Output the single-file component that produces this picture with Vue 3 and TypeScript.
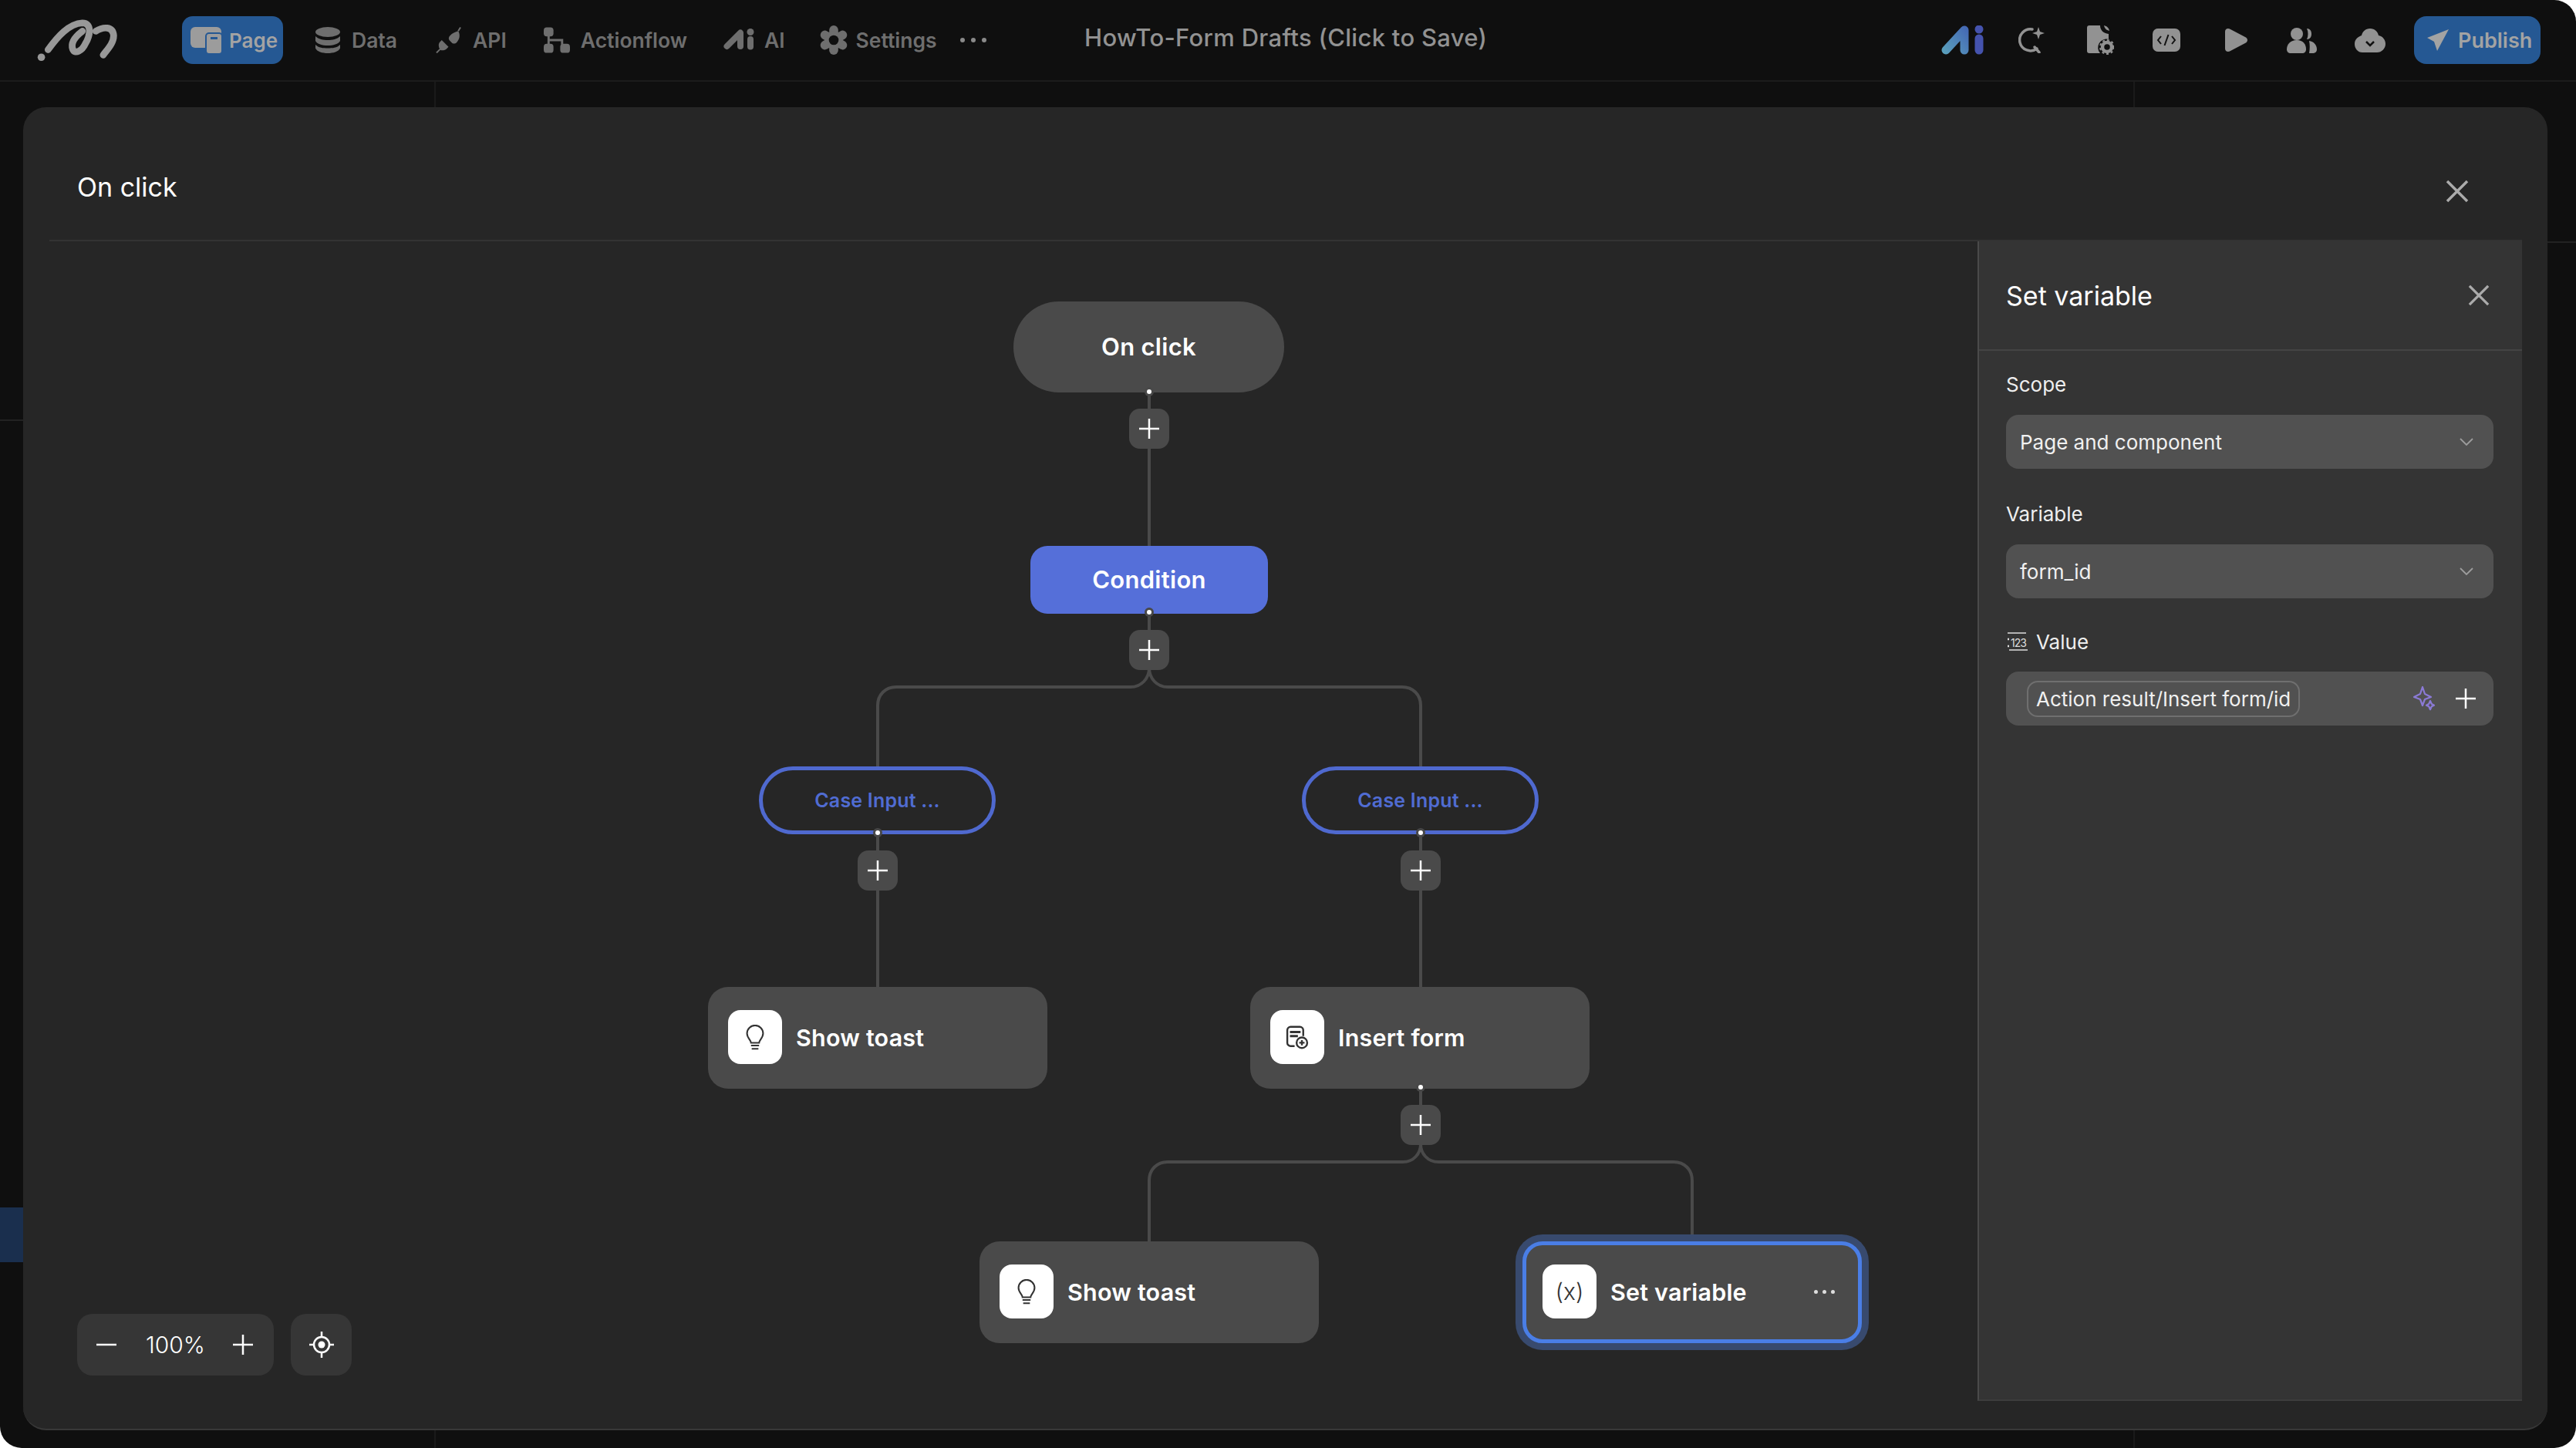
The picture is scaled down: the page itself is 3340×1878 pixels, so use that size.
<script setup lang="ts">
interface NavItem {
  label: string
  icon: string
}

interface FlowNode {
  label: string
  icon: 'bulb' | 'form' | 'var'
  x: number
  y: number
  selected?: boolean
}

const navItems: NavItem[] = [
  { label: 'Data', icon: 'data' },
  { label: 'API', icon: 'api' },
  { label: 'Actionflow', icon: 'flow' },
  { label: 'AI', icon: 'ai' },
  { label: 'Settings', icon: 'gear' },
]

const actionNodes: FlowNode[] = [
  { label: 'Show toast', icon: 'bulb', x: 888, y: 967 },
  { label: 'Insert form', icon: 'form', x: 1591, y: 967 },
  { label: 'Show toast', icon: 'bulb', x: 1240, y: 1297 },
  { label: 'Set variable', icon: 'var', x: 1944, y: 1297, selected: true },
]

const casePills = [{ x: 954 }, { x: 1658 }]

// centres of the little add buttons, relative to the canvas
const addButtons = [
  { x: 1460, y: 244 },
  { x: 1460, y: 531 },
  { x: 1108, y: 817 },
  { x: 1812, y: 817 },
  { x: 1812, y: 1147 },
]

const ports = [
  { x: 1460, y: 195 },
  { x: 1460, y: 481 },
  { x: 1108, y: 767 },
  { x: 1812, y: 767 },
  { x: 1812, y: 1097 },
]

const pos = (p: { x: number; y: number }) => ({ left: `${p.x}px`, top: `${p.y}px` })
</script>

<template>
  <div class="screen">
    <header class="topbar">
      <svg class="logo" viewBox="0 0 110 60" fill="none" stroke="#989898" stroke-linecap="round" stroke-width="9">
        <circle cx="7" cy="53" r="5" fill="#989898" stroke="none" />
        <path d="M16 43C29 25 44 8 62 7C76 7 72 25 66 35C62 44 52 50 49 42C46 33 54 24 62 18" />
        <path d="M80 18C90 12 103 11 104 24C104 34 96 42 90 50" />
      </svg>

      <nav class="nav">
        <div class="nav-item active">
          <svg viewBox="0 0 40 34" class="nav-icon page-icon">
            <rect width="40" height="27" rx="6" fill="#9c9c9c" />
            <rect x="19" y="7" width="23" height="29" rx="5" fill="#255893" />
            <rect x="21" y="9" width="19" height="25" rx="3" fill="#9c9c9c" />
            <rect x="26" y="13" width="9" height="3" fill="#255893" />
          </svg>
          <span>Page</span>
        </div>
        <div v-for="item in navItems" :key="item.label" class="nav-item" :class="`item-${item.icon}`">
          <svg v-if="item.icon === 'data'" viewBox="0 0 33 34" class="nav-icon">
            <ellipse cx="16.5" cy="6.5" rx="16" ry="6.5" fill="#6e6e6e" />
            <path fill="#6e6e6e" d="M.5 12c4 4 10 5 16 5s12-1 16-5v6c-2 4-9 6-16 6s-14-2-16-6z" />
            <path fill="#6e6e6e" d="M.5 23c4 4 10 4.500 16 4.500s12-.5 16-4.500v4.500c-2 4.500-9 6.500-16 6.500s-14-2-16-6.500z" />
          </svg>
          <svg v-else-if="item.icon === 'api'" viewBox="0 0 35 34" class="nav-icon">
            <path fill="#6e6e6e" d="M19 11c3-3 7-5 11-6 3 5 2 11-2 15-2 2-4 2-6 1l-4-4c-1-2-1-4 1-6z" />
            <path fill="#6e6e6e" d="M5 20l3-3 9 9-3 3c-3 2-6 2-8 1-2-3-3-7-1-10z" />
            <path stroke="#6e6e6e" stroke-width="2" d="M30 5l3-5M6 29l-5 5" />
          </svg>
          <svg v-else-if="item.icon === 'flow'" viewBox="0 0 35 34" class="nav-icon">
            <rect x="0" y="0" width="13" height="12" rx="4" fill="#6e6e6e" />
            <rect x="0" y="22" width="13" height="12" rx="4" fill="#6e6e6e" />
            <rect x="22" y="22" width="13" height="12" rx="4" fill="#6e6e6e" />
            <path fill="none" stroke="#6e6e6e" stroke-width="3" d="M6.500 10v14M6.500 17h18v6" />
          </svg>
          <svg v-else-if="item.icon === 'ai'" viewBox="0 0 40 28" class="nav-icon">
            <path fill="none" stroke="#6e6e6e" stroke-width="8" stroke-linecap="round" stroke-linejoin="round" d="M4.500 23L22 5.500V23" />
            <circle cx="35" cy="4.500" r="4.500" fill="#6e6e6e" />
            <path stroke="#6e6e6e" stroke-width="8" stroke-linecap="round" d="M35 14V23.500" />
          </svg>
          <svg v-else viewBox="0 0 36 36" class="nav-icon">
            <g stroke="#6e6e6e" stroke-width="11" stroke-linecap="round">
              <path d="M18 5.500V30.500" />
              <path d="M18 5.500V30.500" transform="rotate(60 18 18)" />
              <path d="M18 5.500V30.500" transform="rotate(120 18 18)" />
            </g>
            <circle cx="18" cy="18" r="11" fill="#6e6e6e" />
            <circle cx="18" cy="18" r="6" fill="#0f0f0f" />
          </svg>
          <span>{{ item.label }}</span>
        </div>
        <div class="nav-more"><i></i><i></i><i></i></div>
      </nav>

      <div class="doc-title">HowTo-Form Drafts (Click to Save)</div>

      <div class="tools">
        <svg viewBox="0 0 55 38" class="ai-mark">
          <defs>
            <linearGradient id="aiGrad" gradientUnits="userSpaceOnUse" x1="2" y1="34" x2="36" y2="6">
              <stop offset="0" stop-color="#5aa0bc" />
              <stop offset="1" stop-color="#4468b4" />
            </linearGradient>
          </defs>
          <path fill="none" stroke="url(#aiGrad)" stroke-width="11" stroke-linecap="round" stroke-linejoin="round" d="M6 32L30 6V32" />
          <circle cx="49" cy="5" r="5.500" fill="#4553ae" />
          <path stroke="#4553ae" stroke-width="11" stroke-linecap="round" d="M49 17V32" />
        </svg>
        <svg viewBox="0 0 34 34" class="tool tool-search" fill="none" stroke="#929292" stroke-width="3.500" stroke-linecap="round">
          <path d="M18 3A14 14 0 1 0 24 28M21 26l6 7" />
          <path fill="#929292" stroke="none" d="M26 0l2 6 6 2-6 2-2 6-2-6-6-2 6-2z" />
        </svg>
        <svg viewBox="0 0 35 38" class="tool tool-file">
          <path fill="#929292" d="M3 0h14c0 6 4 10 11 11v7a11 11 0 0 0-11 18H3a3 3 0 0 1-3-3V3a3 3 0 0 1 3-3z" />
          <path fill="#929292" d="M22 0c4 1 6 3 7 7-4-1-6-3-7-7z" />
          <circle cx="26" cy="28" r="6" fill="none" stroke="#929292" stroke-width="4.500" />
          <circle cx="26" cy="28" r="9" fill="none" stroke="#929292" stroke-width="2" stroke-dasharray="3 3" />
        </svg>
        <svg viewBox="0 0 36 30" class="tool tool-code">
          <rect width="36" height="30" rx="7" fill="#929292" />
          <path fill="none" stroke="#111" stroke-width="2" d="M11 10l-4 5 4 5M25 10l4 5-4 5M20.500 8l-5 14" />
        </svg>
        <svg viewBox="0 0 29 30" class="tool tool-play">
          <path fill="#929292" d="M0 4c0-4 4-5 7-3l19 10c4 2 4 6 0 8L7 29c-3 2-7 1-7-3z" />
        </svg>
        <svg viewBox="0 0 39 33" class="tool tool-users">
          <circle cx="13" cy="8" r="8" fill="#929292" />
          <path fill="#929292" d="M0 28c0-7 5-12 13-12s12 5 12 12c0 3-2 5-5 5H5c-3 0-5-2-5-5z" />
          <path fill="#929292" d="M26 1c4 0 6 3 6 7s-2 7-6 7c2-4 2-10 0-14zM29 17c6 1 10 5 10 11 0 3-2 5-6 5h-4c1-6 1-11 0-16z" />
        </svg>
        <svg viewBox="0 0 40 31" class="tool tool-cloud">
          <path fill="#929292" d="M20 0c6 0 10 4 11 9 5 1 9 5 9 11 0 6-5 11-11 11H10C4 31 0 26 0 20c0-6 4-9 9-11 1-5 5-9 11-9z" />
          <path fill="none" stroke="#111" stroke-width="2.500" d="M15 17l5 5 5-5" />
        </svg>
        <div class="publish">
          <svg viewBox="0 0 28 28" class="publish-icon">
            <path fill="#a3a3a3" d="M28 0L0 11l9 5 4 12z" />
          </svg>
          <span>Publish</span>
        </div>
      </div>
    </header>

    <div class="left-strip"></div>
    <div class="rule rule-left"></div>
    <div class="rule rule-right"></div>
    <div class="stub stub-left"></div>
    <div class="stub stub-right"></div>

    <section class="modal">
      <div class="modal-head">
        <h1>On click</h1>
        <svg viewBox="0 0 30 30" class="close modal-close">
          <path d="M2 2l26 26M28 2L2 28" />
        </svg>
      </div>

      <div class="modal-body">
        <div class="canvas">
          <svg class="wires" width="2535" height="1500" fill="none" stroke="#4a4a4a" stroke-width="4">
            <path d="M1460 194V396" />
            <path d="M1460 481V553C1460 567 1450 578 1436 578H1132C1118 578 1108 588 1108 602V682" />
            <path d="M1460 553C1460 567 1470 578 1484 578H1788C1802 578 1812 588 1812 602V682" />
            <path d="M1108 767V967" />
            <path d="M1812 767V967" />
            <path d="M1812 1097V1171C1812 1183 1803 1194 1789 1194H1484C1470 1194 1460 1204 1460 1218V1297" />
            <path d="M1812 1171C1812 1183 1821 1194 1835 1194H2140C2154 1194 2164 1204 2164 1218V1297" />
          </svg>

          <div class="node start">On click</div>
          <div class="node condition">Condition</div>
          <div v-for="pill in casePills" :key="pill.x" class="node case" :style="{ left: `${pill.x}px` }">Case Input ...</div>

          <div
            v-for="node in actionNodes"
            :key="`${node.x}-${node.y}`"
            class="node action"
            :class="{ selected: node.selected }"
            :style="pos(node)"
          >
            <span class="action-icon">
              <svg v-if="node.icon === 'bulb'" viewBox="0 0 28 38" class="glyph" fill="none" stroke="#333" stroke-width="2.400">
                <path d="M8 27c0-4-6-7-6-14a12 12 0 0 1 24 0c0 7-6 10-6 14z" />
                <path d="M8 31h12M9 36h10" />
              </svg>
              <svg v-else-if="node.icon === 'form'" viewBox="0 0 34 36" class="glyph form-glyph" fill="none" stroke="#333" stroke-width="2.800">
                <path d="M13 31H7a5 5 0 0 1-5-5V7a5 5 0 0 1 5-5h14a5 5 0 0 1 5 5v9" />
                <path d="M6 10h16M6 16h12" stroke-width="3.500" />
                <circle cx="24" cy="26" r="8" />
                <path d="M24 22v8M20 26h8" />
              </svg>
              <span v-else class="var-glyph">(x)</span>
            </span>
            <span class="action-label">{{ node.label }}</span>
            <span v-if="node.selected" class="action-more"><i></i><i></i><i></i></span>
          </div>

          <div v-for="p in ports" :key="`port-${p.x}-${p.y}`" class="port" :style="pos(p)"></div>
          <div v-for="b in addButtons" :key="`add-${b.x}-${b.y}`" class="add" :style="pos(b)">
            <svg viewBox="0 0 26 26" class="plus"><path d="M13 0v26M0 13h26" /></svg>
          </div>

          <div class="zoom-bar">
            <div class="zoom-box">
              <svg viewBox="0 0 26 26" class="plus"><path d="M0 13h26" /></svg>
              <span>100%</span>
              <svg viewBox="0 0 26 26" class="plus"><path d="M13 0v26M0 13h26" /></svg>
            </div>
            <div class="zoom-center">
              <svg viewBox="0 0 32 34" class="target" fill="none" stroke="#fff" stroke-width="2.500">
                <circle cx="16" cy="17" r="10" />
                <circle cx="16" cy="17" r="4.500" fill="#fff" stroke="none" />
                <path d="M16 0v7M16 27v7M0 17h6M26 17h6" />
              </svg>
            </div>
          </div>
        </div>

        <aside class="panel">
          <div class="panel-head">
            <span>Set variable</span>
            <svg viewBox="0 0 30 30" class="close panel-close">
              <path d="M2 2l26 26M28 2L2 28" />
            </svg>
          </div>
          <div class="panel-form">
            <label class="field-label">Scope</label>
            <div class="select">
              <span>Page and component</span>
              <svg viewBox="0 0 18 10" class="chev"><path d="M1 1l8 8 8-8" /></svg>
            </div>
            <label class="field-label">Variable</label>
            <div class="select">
              <span>form_id</span>
              <svg viewBox="0 0 18 10" class="chev"><path d="M1 1l8 8 8-8" /></svg>
            </div>
            <label class="field-label value-label">
              <svg viewBox="0 0 28 26" class="num-icon">
                <path d="M2 2h24M4 24h24" stroke="#ddd" stroke-width="1.500" />
                <path d="M2 10h2M2 19h2" stroke="#ddd" stroke-width="2.500" />
                <text x="6" y="20" font-size="14" fill="#ddd" font-family="Inter, sans-serif" letter-spacing="-1">123</text>
              </svg>
              <span>Value</span>
            </label>
            <div class="value-field">
              <span class="chip">Action result/Insert form/id</span>
              <svg viewBox="0 0 28 32" class="spark" fill="none" stroke="#8b7ad6" stroke-width="2.200" stroke-linejoin="round">
                <path d="M12 1l3 9 8 4-8 3-3 8-3-8-8-3 8-4z" />
                <path d="M22 19l1.800 4 3.200 1.800-3.200 1.400-1.800 4-1.800-4-3.200-1.400 3.200-1.800z" />
              </svg>
              <svg viewBox="0 0 26 26" class="plus field-plus"><path d="M13 0v26M0 13h26" /></svg>
            </div>
          </div>
        </aside>
      </div>
    </section>
  </div>
</template>

<style scoped>
.screen {
  position: relative;
  width: 3340px;
  height: 1878px;
  overflow: hidden;
  background: #0f0f0f;
  border-radius: 0 28px 28px 28px;
  font-family: Inter, "Noto Sans", sans-serif;
  color: #fff;
}

.topbar {
  position: relative;
  display: flex;
  align-items: center;
  height: 106px;
  padding: 0 46px 0 46px;
  box-sizing: border-box;
  border-bottom: 2px solid #1c1c1c;
}

.logo {
  width: 108px;
  height: 58px;
  flex: none;
}

.nav {
  display: flex;
  align-items: center;
  margin-left: 82px;
  font-size: 26.500px;
  font-weight: 600;
  color: #6e6e6e;
}

.nav-item {
  display: flex;
  align-items: center;
  gap: 14px;
  margin-right: 50px;
}

.nav-item.active {
  width: 131px;
  height: 62px;
  box-sizing: border-box;
  padding-left: 11px;
  gap: 10px;
  background: #255893;
  border-radius: 14px;
  color: #a3a3a3;
  margin-right: 41px;
  font-size: 26px;
}

.nav-icon {
  width: 34px;
  height: 34px;
  flex: none;
}

.page-icon {
  width: 40px;
}

.item-api {
  margin-right: 48px;
}

.item-flow {
  margin-right: 47px;
}

.item-ai .nav-icon {
  width: 40px;
  height: 28px;
  margin-top: -2px;
}

.item-ai {
  gap: 13px;
  margin-right: 44px;
}

.item-gear {
  gap: 10px;
}

.item-gear .nav-icon {
  width: 38px;
  height: 38px;
}

.nav-more {
  display: flex;
  gap: 8px;
  margin-left: -20px;
}

.nav-more i,
.action-more i {
  display: block;
  width: 6px;
  height: 6px;
  border-radius: 50%;
  background: #8a8a8a;
}

.doc-title {
  position: absolute;
  left: 1406px;
  top: 29px;
  font-size: 31px;
  line-height: 40px;
  font-weight: 500;
  letter-spacing: 0.3px;
  color: #929292;
  white-space: nowrap;
}

.tools {
  display: flex;
  align-items: center;
  margin-left: auto;
  gap: 44px;
}

.ai-mark {
  width: 55px;
  height: 38px;
}

.tool {
  flex: none;
}

.tool-search {
  width: 34px;
  height: 34px;
  margin-left: 1px;
}

.tool-file {
  width: 35px;
  height: 38px;
  margin-left: 11px;
}

.tool-code {
  width: 36px;
  height: 30px;
  margin-left: 6px;
}

.tool-play {
  width: 29px;
  height: 30px;
  margin-left: 14px;
}

.tool-users {
  width: 39px;
  height: 33px;
  margin-left: 7px;
}

.tool-cloud {
  width: 40px;
  height: 31px;
  margin-left: 5px;
}

.publish {
  display: flex;
  align-items: center;
  gap: 12px;
  width: 164px;
  height: 62px;
  box-sizing: border-box;
  padding-left: 17px;
  margin-left: -7px;
  border-radius: 16px;
  background: #255893;
  color: #a3a3a3;
  font-size: 27px;
  font-weight: 600;
}

.publish-icon {
  width: 28px;
  height: 28px;
}

.left-strip {
  position: absolute;
  left: 0;
  top: 1566px;
  width: 40px;
  height: 71px;
  background: #1a2f4e;
}

.rule {
  position: absolute;
  top: 106px;
  bottom: 0;
  width: 2px;
  background: #1a1a1a;
}

.rule-left {
  left: 563px;
}

.rule-right {
  left: 2766px;
}

.stub {
  position: absolute;
  height: 2px;
  background: #222;
}

.stub-left {
  left: 0;
  top: 544px;
  width: 32px;
}

.stub-right {
  left: 3300px;
  top: 313px;
  width: 40px;
}

.modal {
  position: absolute;
  left: 30px;
  top: 139px;
  width: 3273px;
  height: 1716px;
  display: flex;
  flex-direction: column;
  background: #262626;
  border-radius: 30px;
  border-bottom: 2px solid #383838;
  box-sizing: border-box;
}

.modal-head {
  display: flex;
  align-items: flex-start;
  justify-content: space-between;
  height: 174px;
  flex: none;
  box-sizing: border-box;
  margin: 0 33px 0 34px;
  padding: 0 69px 0 36px;
  border-bottom: 2px solid #333;
}

.modal-head h1 {
  margin: 83px 0 0;
  font-size: 34px;
  font-weight: 400;
  line-height: 42px;
}

.close {
  fill: none;
  stroke: #ababab;
  stroke-width: 3.500;
}

.modal-close {
  width: 30px;
  height: 30px;
  margin-top: 94px;
}

.modal-body {
  display: flex;
  flex: 1;
  min-height: 0;
  margin-bottom: 36px;
}

.canvas {
  position: relative;
  flex: 1;
  min-width: 0;
}

.wires {
  position: absolute;
  left: 0;
  top: 0;
}

.node {
  position: absolute;
  display: flex;
  align-items: center;
  justify-content: center;
  box-sizing: border-box;
  font-weight: 600;
  font-size: 31px;
  letter-spacing: 0.3px;
}

.start {
  left: 1284px;
  top: 78px;
  width: 351px;
  height: 118px;
  padding-bottom: 2px;
  border-radius: 59px;
  background: #4a4a4a;
}

.condition {
  left: 1306px;
  top: 395px;
  width: 308px;
  height: 88px;
  padding-bottom: 2px;
  border-radius: 22px;
  background: #556fd9;
}

.case {
  top: 681px;
  width: 307px;
  height: 88px;
  border-radius: 44px;
  border: 5px solid #4f69cf;
  background: #262626;
  color: #506cd2;
  font-size: 25px;
  letter-spacing: 0.2px;
}

.action {
  justify-content: flex-start;
  width: 440px;
  height: 132px;
  padding-left: 26px;
  padding-bottom: 2px;
  border-radius: 26px;
  background: #4a4a4a;
  font-size: 30.500px;
  letter-spacing: 0.2px;
}

.action.selected {
  border: 5px solid #4a7ee6;
  padding-left: 21px;
  box-shadow: 0 0 0 9px #384a6e;
}

.action-icon {
  display: flex;
  align-items: center;
  justify-content: center;
  width: 70px;
  height: 70px;
  flex: none;
  border-radius: 16px;
  background: #fff;
}

.glyph {
  width: 26px;
  height: 33px;
}

.form-glyph {
  width: 30px;
  height: 31px;
}

.var-glyph {
  color: #333;
  font-size: 30px;
  font-weight: 300;
  letter-spacing: 0;
}

.action-label {
  margin-left: 18px;
}

.action-more {
  display: flex;
  gap: 6px;
  margin-left: auto;
  margin-right: 30px;
}

.action-more i {
  width: 5px;
  height: 5px;
  background: #ddd;
}

.port {
  position: absolute;
  width: 6px;
  height: 6px;
  margin: -3px 0 0 -3px;
  border-radius: 50%;
  background: #fff;
  box-shadow: 0 0 0 3px #484848;
}

.add {
  position: absolute;
  display: flex;
  align-items: center;
  justify-content: center;
  width: 52px;
  height: 52px;
  margin: -27px 0 0 -26px;
  border-radius: 14px;
  background: #4a4a4a;
}

.plus {
  width: 26px;
  height: 26px;
  flex: none;
  stroke: #fff;
  stroke-width: 2.500;
  fill: none;
}

.zoom-bar {
  position: absolute;
  left: 70px;
  bottom: 33px;
  display: flex;
  gap: 22px;
}

.zoom-box {
  display: flex;
  align-items: center;
  justify-content: space-between;
  width: 255px;
  height: 80px;
  padding: 0 27px 0 25px;
  box-sizing: border-box;
  border-radius: 20px;
  background: #363636;
  font-size: 30px;
  font-weight: 300;
}

.zoom-box span {
  margin-left: 2px;
}

.zoom-center {
  display: flex;
  align-items: center;
  justify-content: center;
  width: 79px;
  height: 80px;
  border-radius: 20px;
  background: #363636;
}

.target {
  width: 32px;
  height: 34px;
}

.panel {
  flex: none;
  width: 706px;
  margin-right: 33px;
  background: #343434;
  border-left: 2px solid #4a4a4a;
  border-bottom: 2px solid #3d3d3d;
  box-sizing: border-box;
  display: flex;
  flex-direction: column;
}

.panel-head {
  display: flex;
  align-items: center;
  justify-content: space-between;
  height: 142px;
  flex: none;
  box-sizing: border-box;
  padding: 0 42px 0 35px;
  border-bottom: 2px solid #444;
  font-size: 34px;
}

.panel-close {
  width: 28px;
  height: 28px;
}

.panel-form {
  display: flex;
  flex-direction: column;
  padding: 0 37px 0 35px;
  font-size: 26px;
}

.field-label {
  display: flex;
  align-items: center;
  gap: 11px;
  height: 30px;
  margin: 28px 0 25px;
  color: #eee;
}

.select + .field-label {
  margin-top: 43px;
}

.select + .value-label {
  margin-top: 41px;
}

.value-label {
  margin-bottom: 24px;
}

.select {
  display: flex;
  align-items: center;
  justify-content: space-between;
  height: 70px;
  padding: 0 26px 0 18px;
  border-radius: 16px;
  background: #515151;
  color: #f0f0f0;
}

.chev {
  width: 18px;
  height: 10px;
  fill: none;
  stroke: #9d9d9d;
  stroke-width: 1.800;
}

.num-icon {
  width: 28px;
  height: 26px;
}

.value-field {
  display: flex;
  align-items: center;
  height: 70px;
  padding: 0 23px 0 27px;
  border-radius: 16px;
  background: #515151;
}

.chip {
  display: flex;
  align-items: center;
  height: 47px;
  padding: 0 10px;
  box-sizing: border-box;
  border: 2px solid #6f6f6f;
  border-radius: 14px;
  white-space: nowrap;
  color: #f0f0f0;
}

.spark {
  width: 28px;
  height: 32px;
  margin-left: auto;
}

.field-plus {
  margin-left: 27px;
}
</style>

<style>
html,
body {
  background: #fff;
}
</style>
